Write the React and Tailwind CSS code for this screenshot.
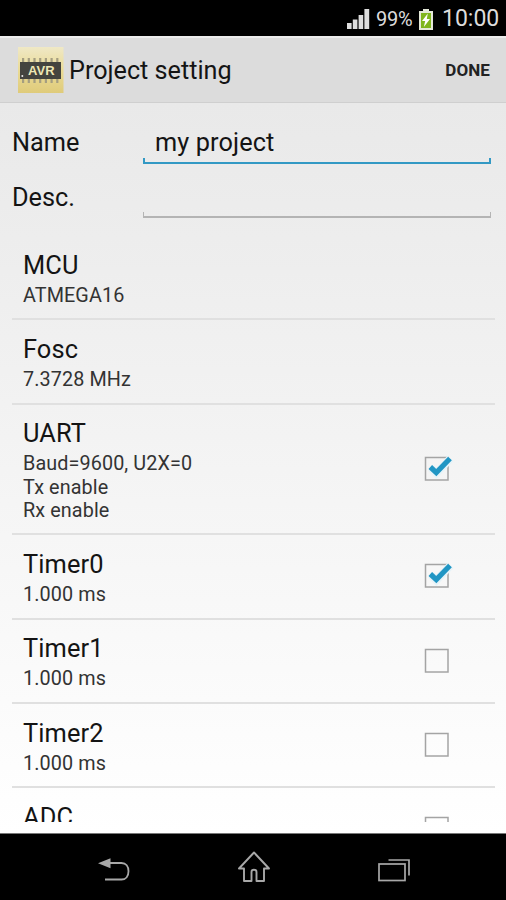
import { useState } from 'react'

const initialItems = [
  { title: 'MCU', lines: ['ATMEGA16'] },
  { title: 'Fosc', lines: ['7.3728 MHz'] },
  { title: 'UART', lines: ['Baud=9600, U2X=0', 'Tx enable', 'Rx enable'], checked: true },
  { title: 'Timer0', lines: ['1.000 ms'], checked: true },
  { title: 'Timer1', lines: ['1.000 ms'], checked: false },
  { title: 'Timer2', lines: ['1.000 ms'], checked: false },
  { title: 'ADC', lines: [], checked: false },
]

function StatusBar() {
  return (
    <div className="h-9 shrink-0 bg-black flex items-center justify-end pt-[2px] pr-2 text-[#dcdcdc]">
      {/* Signal */}
      <svg width="23" height="20" viewBox="0 0 23 20" fill="#dedede" className="mr-[6px]">
        <rect x="0" y="14" width="4.6" height="6" />
        <rect x="5.8" y="10.5" width="4.6" height="9.5" />
        <rect x="11.6" y="6" width="4.6" height="14" />
        <rect x="17.4" y="0" width="4.8" height="20" />
      </svg>
      <span className="w-[37px] text-[20px] tracking-[-0.2px] whitespace-nowrap">99%</span>
      {/* Battery */}
      <svg width="14" height="21" viewBox="0 0 14 21" className="ml-[6px] mr-[9px]">
        <path d="M4 0h6v2h4v19H0V2h4z" fill="#e4e8d8" />
        <path d="M2 4h10v15H2z" fill="#7fb51c" />
        <path d="M8.8 4.5L3 12h3.2l-1.4 6L11 10H7.8z" fill="#fff" />
      </svg>
      <span className="w-[56px] text-[23px] whitespace-nowrap">10:00</span>
    </div>
  )
}

function AppIcon() {
  const pins = [4, 9.7, 15.4, 21.1, 26.8, 32.5, 38.2]
  return (
    <svg width="46" height="46" viewBox="0 0 46 46">
      <defs>
        <linearGradient id="gold" x1="0" y1="0" x2="0" y2="1">
          <stop offset="0" stopColor="#efe8c6" />
          <stop offset="0.5" stopColor="#eadb96" />
          <stop offset="1" stopColor="#dfcb7a" />
        </linearGradient>
      </defs>
      <rect width="45.5" height="46" fill="url(#gold)" />
      {pins.map((x) => (
        <g key={x} fill="#a59e80">
          <rect x={x} y="11" width="2.2" height="5" />
          <rect x={x} y="31" width="2.2" height="5" />
        </g>
      ))}
      <rect x="2" y="15" width="41" height="17" fill="#44443f" />
      <circle cx="4.3" cy="29" r="1" fill="#eee" />
      <text
        x="23.3"
        y="27.5"
        textAnchor="middle"
        fontSize="13"
        fontWeight="700"
        fill="#eee7b4"
        fontFamily="Liberation Sans, sans-serif"
      >
        AVR
      </text>
    </svg>
  )
}

function ActionBar() {
  return (
    <header className="h-[67px] shrink-0 bg-[#dcdcdc] border-t-2 border-t-[#ececec] border-b border-b-[#cfcfcf] flex items-center pl-[18px] pr-4">
      <AppIcon />
      <h1 className="ml-[5px] mt-[2px] flex-1 text-[25.2px] leading-[30px]">Project setting</h1>
      <button className="mt-[2px] text-[17px] tracking-[0.1px] font-bold text-[#222]">DONE</button>
    </header>
  )
}

function Field({ label, value, onChange, active }) {
  return (
    <label className="h-[55px] flex items-start pl-3 pr-[15px]">
      <span className="w-[131px] pt-[6px] text-[25.3px] leading-[30px]">{label}</span>
      <span className="relative flex-1">
        <input
          value={value}
          onChange={onChange}
          className="block w-full h-10 pl-3 pt-px bg-transparent text-[25.3px] tracking-[0.1px] outline-none"
        />
        {/* Bracket-shaped underline */}
        <span
          className={
            active
              ? 'absolute inset-x-0 top-[36px] h-[6px] border-x-2 border-b-2 border-[#3399c4]'
              : 'absolute inset-x-0 top-[35px] h-[6px] border-x border-b-2 border-[#b4b4b4]'
          }
        />
      </span>
    </label>
  )
}

function Checkbox({ checked }) {
  return (
    <svg width="32" height="30" viewBox="0 0 32 30" className="shrink-0">
      <rect x="2.5" y="3.5" width="22.5" height="22.5" fill="none" stroke="#a4a4a4" strokeWidth="1.5" />
      {checked && (
        <>
          <path d="M8 14l5.3 5.2L27.5 4.5" fill="none" stroke="#e6f3f8" strokeWidth="8" />
          <path d="M7.3 13l6 5.6L27 4.5" fill="none" stroke="#2196c4" strokeWidth="5.2" />
        </>
      )}
    </svg>
  )
}

function SettingRow({ item, onToggle }) {
  return (
    <li
      onClick={onToggle}
      className="min-h-[84.3px] shrink-0 flex items-center border-b-2 border-[#e0e0e0] pl-[11px] pr-[40px]"
    >
      <div className="flex-1 self-start pt-[13.8px] pb-[11.2px]">
        <h2 className="text-[25.4px] leading-[30px] mb-[4.1px] tracking-[0.1px]">{item.title}</h2>
        {item.lines.map((line) => (
          <p key={line} className="text-[19.8px] leading-[23.2px] tracking-[0.1px] text-[#333]">
            {line}
          </p>
        ))}
      </div>
      {item.checked !== undefined && <Checkbox checked={item.checked} />}
    </li>
  )
}

function NavBar() {
  return (
    <nav className="h-[67px] shrink-0 bg-black border-t border-[#777] flex items-center justify-between pl-[97px] pr-[95px]">
      {/* Back */}
      <svg width="34" height="26" viewBox="0 0 34 26" className="mt-[5px]" fill="none" stroke="#a8a8a8" strokeWidth="1.8">
        <path d="M12 6h12.5c4.5 0 7 3.5 7 8.2s-2.5 8.3-7 8.3H8" />
        <path d="M1 6.3L13.5 1.3v10z" fill="#a8a8a8" stroke="none" />
      </svg>
      {/* Home */}
      <svg width="34" height="32" viewBox="0 0 34 32" className="mr-[2px]" fill="none" stroke="#a8a8a8" strokeWidth="1.9">
        <path d="M17 1.5L2 17.5h5V30h7.5V21c0-3 5-3 5 0V30H27V17.5h5z" strokeLinejoin="round" />
      </svg>
      {/* Recents */}
      <svg width="33" height="24" viewBox="0 0 33 24" className="mt-[5px]" fill="none" stroke="#a8a8a8" strokeWidth="1.7">
        <rect x="1" y="6" width="26" height="16.5" />
        <path d="M10.5 2H31V17.5" />
      </svg>
    </nav>
  )
}

function App() {
  const [name, setName] = useState('my project')
  const [desc, setDesc] = useState('')
  const [items, setItems] = useState(initialItems)

  function toggle(index) {
    setItems(
      items.map((item, i) =>
        i === index && item.checked !== undefined ? { ...item, checked: !item.checked } : item
      )
    )
  }

  return (
    <div className="w-full h-screen flex flex-col overflow-hidden font-['Roboto',sans-serif] text-[#141414]">
      <StatusBar />
      <ActionBar />

      <main className="flex-1 min-h-0 flex flex-col bg-linear-to-b from-[#e9e9e9] to-white pt-[19px] pb-[11px]">
        <Field label="Name" value={name} onChange={(e) => setName(e.target.value)} active />
        <Field label="Desc." value={desc} onChange={(e) => setDesc(e.target.value)} />

        <ul className="flex-1 min-h-0 flex flex-col overflow-hidden mt-[4px] ml-3 mr-[11px]">
          {items.map((item, i) => (
            <SettingRow key={item.title} item={item} onToggle={() => toggle(i)} />
          ))}
        </ul>
      </main>

      <NavBar />
    </div>
  )
}

export default App
